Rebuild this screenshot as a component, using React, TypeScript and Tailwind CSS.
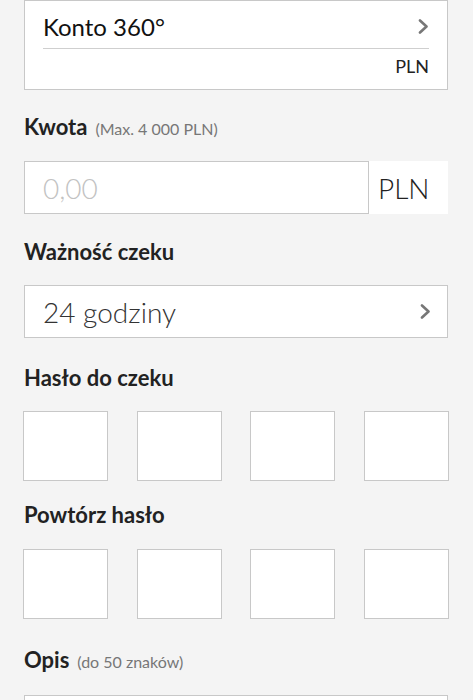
import React from "react";

const Chevron = () => (
  <svg width="11" height="15" viewBox="0 0 11 15" className="shrink-0">
    <path d="M2 1.5 L8.5 7.5 L2 13.5" fill="none" stroke="#777777" strokeWidth="2.6" strokeLinecap="round" strokeLinejoin="round" />
  </svg>
);

const PinBoxes = () => (
  <div className="-mx-[1px] flex justify-between">
    {[0, 1, 2, 3].map((i) => (
      <div key={i} className="h-[70px] w-[85px] border border-[#c8c8c8] bg-white" />
    ))}
  </div>
);

const Label = ({ title, hint, className }: { title: string; hint?: string; className?: string }) => (
  <div className={"flex items-baseline gap-[8px] leading-[28px] " + (className ?? "")}>
    <span className="text-[22px] font-bold text-[#222222]">{title}</span>
    {hint && <span className="text-[16px] text-[#777777]">{hint}</span>}
  </div>
);

const App = () => {
  return (
    <div className="min-h-screen bg-[#f4f4f4] pl-[24px] pr-[25px] font-['Lato','Liberation_Sans',sans-serif]">
      {/* konto */}
      <div className="h-[90px] border border-[#c8c8c8] bg-white px-[18px] pt-[11px]">
        <div className="flex h-[29px] items-center justify-between">
          <span className="text-[24px] leading-[29px] text-[#111111]">Konto 360°</span>
          <Chevron />
        </div>
        <div className="mt-[7px] h-[1px] bg-[#cfcfcf]" />
        <div className="mt-[6px] text-right text-[18px] leading-[22px] text-[#222222]">PLN</div>
      </div>

      <Label title="Kwota" hint="(Max. 4 000 PLN)" className="mt-[23px]" />
      <div className="mt-[18px] flex h-[53px]">
        <div className="flex flex-1 items-center border border-[#c8c8c8] bg-white pl-[18px]">
          <span className="text-[28px] font-light text-[#c2c2c2]">0,00</span>
        </div>
        <div className="flex w-[79px] items-center bg-white pl-[9px]">
          <span className="text-[28px] font-light text-[#222222]">PLN</span>
        </div>
      </div>

      <Label title="Ważność czeku" className="mt-[24px]" />
      <div className="mt-[19px] flex h-[53px] items-center justify-between border border-[#c8c8c8] bg-white pl-[18px] pr-[16px]">
        <span className="text-[28px] font-light text-[#333333]">24 godziny</span>
        <Chevron />
      </div>

      <Label title="Hasło do czeku" className="mt-[26px]" />
      <div className="mt-[19px]">
        <PinBoxes />
      </div>

      <Label title="Powtórz hasło" className="mt-[20px]" />
      <div className="mt-[20px]">
        <PinBoxes />
      </div>

      <Label title="Opis" hint="(do 50 znaków)" className="mt-[27px]" />
      <div className="mt-[19px] h-[53px] border border-[#c8c8c8] bg-white" />
    </div>
  );
};

export default App;
